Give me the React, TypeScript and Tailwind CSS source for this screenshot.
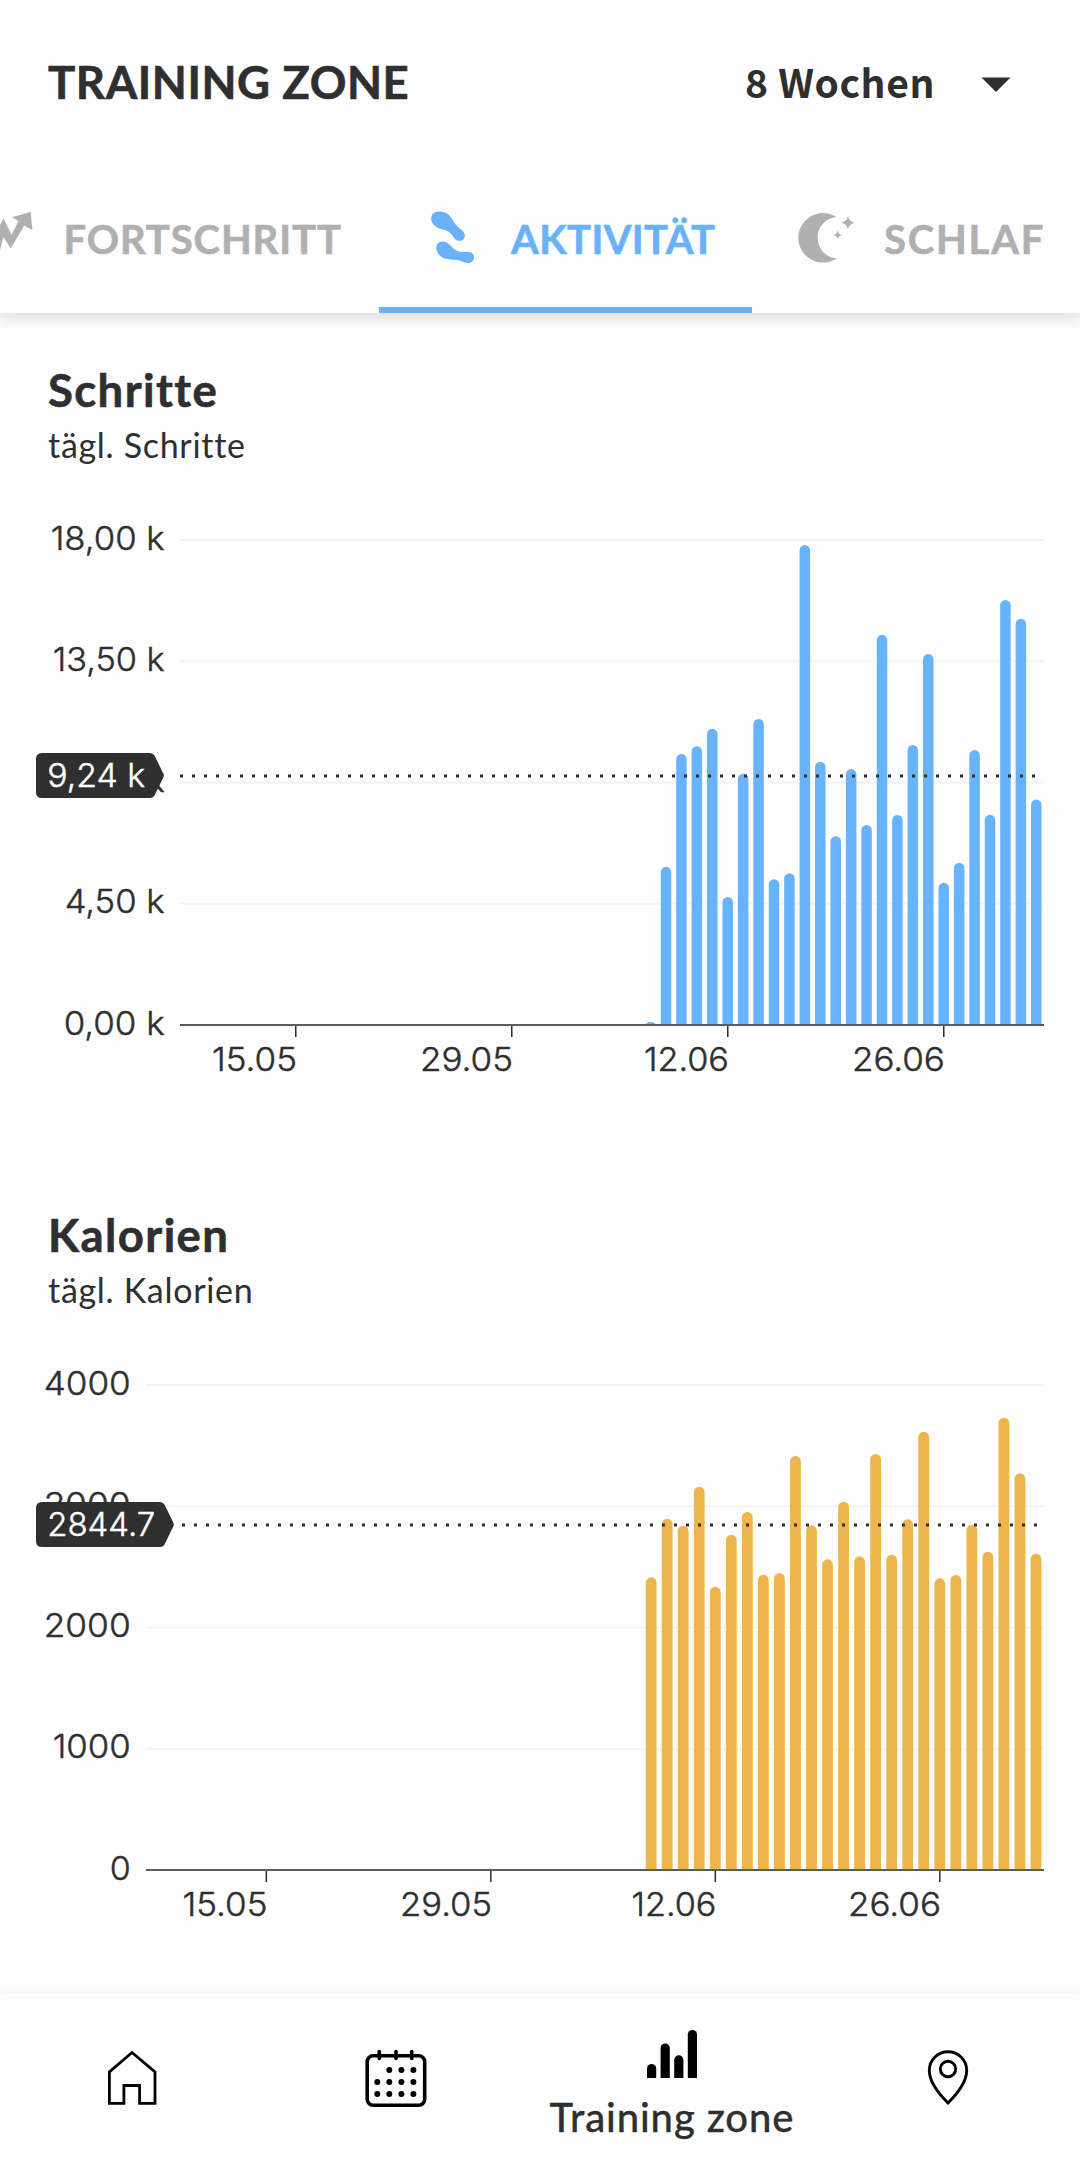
import React from "react";

type Label = { text: string; width: number };

type ChartProps = {
  title: string;
  subtitle: string;
  left: number;
  color: string;
  yLabels: Label[];
  yRight: number;
  xLabels: Label[];
  tops: number[];
  barWidth: number;
  average: { y: number; text: string; width: number; tip: number };
};

const RIGHT = 1044;
const TOP = 70;
const BASE = 555;
const DAYS = 56;

function AxisText({ x, y, label, fill }: { x: number; y: number; label: Label; fill: string }) {
  return (
    <text
      x={x + 1.2}
      y={y}
      textAnchor="end"
      textLength={label.width + 3}
      lengthAdjust="spacingAndGlyphs"
      fill={fill}
      stroke={fill}
      strokeWidth="0.45"
      className="font-['Inter',sans-serif] text-[33px] font-light"
    >
      {label.text}
    </text>
  );
}

function ActivityChart(props: ChartProps) {
  const { left, tops, average, barWidth, color } = props;
  const step = (RIGHT - left) / DAYS;
  const center = (day: number) => left + step * (day + 0.5);
  const first = DAYS - tops.length;
  const tip = average.tip;
  const ay = average.y;
  return (
    <section className="pt-[50px]">
      <h2 className="pl-[48px] text-[45.5px] leading-[54px] font-bold tracking-[1.4px] [-webkit-text-stroke:0.6px_#2f2f2f]">
        {props.title}
      </h2>
      <p className="pt-px pl-[48px] text-[34px] leading-[54px] tracking-[0.7px]">{props.subtitle}</p>
      <svg width="1080" height="686" viewBox="0 2 1080 686" className="block">
        {[0, 1, 2, 3].map((i) => (
          <rect key={i} x={left} y={TOP - 1 + i * 121.25} width={RIGHT - left} height="2" fill="#f3f3f3" />
        ))}
        {tops.map((top, i) => {
          const x = center(first + i) - barWidth / 2;
          const r = Math.min(barWidth / 2, BASE - top);
          return (
            <path
              key={i}
              fill={color}
              d={`M${x} ${BASE}V${top + r}a${barWidth / 2} ${r} 0 0 1 ${barWidth} 0V${BASE}z`}
            />
          );
        })}
        <rect x={left} y={BASE - 1} width={RIGHT - left} height="2" fill="#5c5c5c" />
        {props.xLabels.map((label, i) => {
          const x = center(7 + i * 14);
          return (
            <g key={label.text}>
              <rect x={x - 0.7} y={BASE + 1} width="1.5" height="11" fill="#2f2f2f" />
              <AxisText x={x} y={BASE + 45.8} label={label} fill="#2f2f2f" />
            </g>
          );
        })}
        {props.yLabels.map((label, i) => (
          <AxisText key={label.text} x={props.yRight} y={TOP + 9.6 + i * 121.25} label={label} fill="#2f2f2f" />
        ))}
        <line x1={left} x2={RIGHT - 6} y1={ay} y2={ay} stroke="#2f2f2f" strokeWidth="3" strokeDasharray="3 9" />
        <path
          fill="#2f2f2f"
          d={`M42 ${ay - 23}H${tip - 14}q3 0 4.5 2.5L${tip - 1} ${ay - 3}q1.5 2.5 0 5L${tip - 9.5} ${ay + 19.5}q-1.500 2.500-4.500 2.500H42q-6 0-6-6V${ay - 17}q0-6 6-6z`}
        />
        <AxisText x={49 + average.width} y={ay + 11} label={{ text: average.text, width: average.width }} fill="#ffffff" />
      </svg>
    </section>
  );
}

const STEP_TOPS = [
  1022, 866.7, 754, 746.3, 728.7, 897, 773.7, 719, 879.3, 873.3, 545, 761.7, 836.3, 769, 825, 634.7, 815, 745, 654,
  882.7, 862.7, 750, 814.7, 600, 618.7, 799.5,
].map((y) => y - 470);

const CALORIE_TOPS = [
  592, 416, 437, 320, 620, 464, 396, 584, 579, 228, 436, 538, 365, 529, 222, 524, 418, 155, 595, 585, 434, 515, 113,
  280, 521,
].map((y) => 65 + y / 3);

function TrendIcon() {
  return (
    <svg width="34" height="60" viewBox="0 0 34 60" fill="#b0b0b0" className="shrink-0">
      <path d="M30.600 3.700 12 9.300l6.500 3.700L11.500 27 3.600 10.500 0 17v25L3.500 29 10.700 40.500 24.300 17.500l8.100 4.500z" />
    </svg>
  );
}

function StepsIcon() {
  return (
    <svg width="44" height="54" viewBox="0 0 44 54" fill="#69b2fb">
      <path d="M5.500 0.800C11 -0.700 17.500 2 20.500 7c2 4 4.500 7.500 8.500 10.500 4.500 3.200 6 6.500 4 10-2.400 3.600-7.500 3.300-9.800-.5-2.500-4.200-5.500-7-10.200-8.300C4.500 17.500-.5 12 .3 6.300.7 3.500 2.500 1.600 5.500.8z" />
      <path d="M8 31.500c4-2 8-.6 11.300 2.900 3.500 3.800 6.200 5.900 11.500 6.500 2 .3 3.400.2 5.200 0 5-.4 7.700 3 7 6.600-.7 3.800-4.500 5.300-9 4-4-1.500-6.500-2.500-11-2.700-7-.2-13.500-1.600-16.500-7.200-2.300-4.300-1.500-8.400 1.500-10.100z" />
    </svg>
  );
}

function MoonIcon() {
  return (
    <svg width="60" height="52" viewBox="0 0 60 52" fill="#b0b0b0">
      <path d="M39 5.300A24.800 24.800 0 1 0 39 46.300C28 46 19.700 37 19.700 25.800S28 5.300 39 5.300z" />
      <path d="M50 4c1.200 4.300 2.400 5.500 6.700 6.700-4.300 1.200-5.500 2.400-6.700 6.700-1.200-4.300-2.400-5.500-6.700-6.700C47.600 9.500 48.800 8.300 50 4z" />
      <path d="M39.700 18.700c.8 2.800 1.600 3.600 4.300 4.300-2.700.8-3.500 1.600-4.300 4.300-.8-2.700-1.600-3.500-4.300-4.300 2.700-.7 3.500-1.500 4.300-4.300z" />
    </svg>
  );
}

function HomeIcon() {
  return (
    <svg width="50" height="56" viewBox="0 0 50 56" fill="none" stroke="#000" strokeWidth="2.800">
      <path d="M25 2.500 48 22v31.300H32.600V35.500H16.900v17.800H2.400V22z" />
    </svg>
  );
}

function CalendarIcon() {
  return (
    <svg width="62" height="60" viewBox="0 0 62 60">
      <rect x="2.200" y="6.700" width="57.500" height="49.500" rx="6" fill="none" stroke="#000" strokeWidth="3.600" />
      {[14.3, 31, 46.700].map((x) => (
        <line key={x} x1={x} x2={x} y1="2.500" y2="9.500" stroke="#000" strokeWidth="3.600" strokeLinecap="round" />
      ))}
      {[21, 33, 45].map((y, row) =>
        [12.300, 24.300, 36.400, 48.400].map((x, col) =>
          row === 0 && col === 0 ? null : <circle key={`${x}-${y}`} cx={x} cy={y} r="3" />
        )
      )}
    </svg>
  );
}

function BarsIcon() {
  return (
    <svg width="50" height="48" viewBox="0 0 50 48">
      {[34, 13.500, 25.300, 0].map((y, i) => (
        <path key={y} d={`M${i * 13.6} 48V${y + 4.600}a4.600 4.600 0 0 1 9.200 0V48z`} />
      ))}
    </svg>
  );
}

function PinIcon() {
  return (
    <svg width="44" height="56" viewBox="0 0 44 56" fill="none" stroke="#000" strokeWidth="2.900">
      <path d="M22 53C15 46 3.300 33 3.300 20.500a18.700 18.700 0 0 1 37.400 0C40.700 33 29 46 22 53z" />
      <circle cx="22" cy="19" r="7.700" />
    </svg>
  );
}

export default function App() {
  return (
    <div className="flex h-[2162px] w-[1080px] flex-col overflow-hidden bg-[#fefefe] font-['Lato',sans-serif] text-[#2f2f2f]">
      <header className="z-10 h-[313px] shrink-0 bg-[#fefefe] shadow-[0_4px_12px_2px_rgba(0,0,0,0.12)]">
        <div className="flex h-[163px] items-center justify-between pr-[69px] pl-[48px]">
          <h1 className="pt-[2px] text-[45.5px] font-bold tracking-[0.55px] [-webkit-text-stroke:0.6px_#2f2f2f]">
            TRAINING ZONE
          </h1>
          <button className="flex items-center gap-[46px] pt-[2px] font-['Noto_Sans_CJK_JP',sans-serif] text-[39px] leading-[56px] font-bold tracking-[0.6px]">
            <span className="pb-[3px]">8 Wochen</span>
            <svg width="30" height="18" viewBox="0 -3 30 18" fill="#2f2f2f">
              <path d="M.5 0.500h29L15 15z" />
            </svg>
          </button>
        </div>
        <nav className="flex h-[150px] text-[40px] font-bold text-[#b0b0b0]">
          <div className="flex w-[379px] items-center gap-[29.5px]">
            <TrendIcon />
            <span className="pt-px tracking-[0.9px] [-webkit-text-stroke:0.6px_#b0b0b0]">FORTSCHRITT</span>
          </div>
          <div className="flex w-[373px] items-center gap-[36px] border-b-6 border-[#6cb2f3] pt-[6px] pl-[52px] text-[#69b2fb]">
            <StepsIcon />
            <span className="pt-px tracking-[0.4px] [-webkit-text-stroke:0.6px_#69b2fb]">AKTIVITÄT</span>
          </div>
          <div className="flex items-center gap-[26px] pl-[46px]">
            <MoonIcon />
            <span className="pt-px tracking-[1.8px] [-webkit-text-stroke:0.6px_#b0b0b0]">SCHLAF</span>
          </div>
        </nav>
      </header>
      <main className="h-[1681px] shrink-0 overflow-hidden">
        <ActivityChart
          title="Schritte"
          subtitle="tägl. Schritte"
          left={180}
          color="#67b3fd"
          yRight={163.500}
          yLabels={[
            { text: "18,00 k", width: 111 },
            { text: "13,50 k", width: 109 },
            { text: "9,00 k", width: 98 },
            { text: "4,50 k", width: 97 },
            { text: "0,00 k", width: 98 },
          ]}
          xLabels={[
            { text: "15.05", width: 82 },
            { text: "29.05", width: 90 },
            { text: "12.06", width: 82 },
            { text: "26.06", width: 90 },
          ]}
          tops={STEP_TOPS}
          barWidth={10.500}
          average={{ y: 306, text: "9,24 k", width: 95, tip: 164 }}
        />
        <ActivityChart
          title="Kalorien"
          subtitle="tägl. Kalorien"
          left={146}
          color="#edb54b"
          yRight={129.500}
          yLabels={[
            { text: "4000", width: 84 },
            { text: "3000", width: 84 },
            { text: "2000", width: 84 },
            { text: "1000", width: 75 },
            { text: "0", width: 18 },
          ]}
          xLabels={[
            { text: "15.05", width: 82 },
            { text: "29.05", width: 89 },
            { text: "12.06", width: 82 },
            { text: "26.06", width: 90 },
          ]}
          tops={CALORIE_TOPS}
          barWidth={10.800}
          average={{ y: 210, text: "2844.7", width: 105, tip: 174 }}
        />
      </main>
      <footer className="z-10 grid h-[168px] shrink-0 grid-cols-[264px_264px_288px_264px] bg-[#fefefe] shadow-[0_-2px_8px_rgba(0,0,0,0.06)]">
        <div className="flex items-start justify-center pt-[56px]">
          <HomeIcon />
        </div>
        <div className="flex items-start justify-center pt-[55px]">
          <CalendarIcon />
        </div>
        <div className="flex flex-col items-center gap-[11px] pt-[36px]">
          <BarsIcon />
          <span className="text-[40px] leading-[56px] font-medium tracking-[0.9px] whitespace-nowrap [-webkit-text-stroke:0.3px_#2f2f2f]">
            Training zone
          </span>
        </div>
        <div className="flex items-start justify-center pt-[56px]">
          <PinIcon />
        </div>
      </footer>
    </div>
  );
}
